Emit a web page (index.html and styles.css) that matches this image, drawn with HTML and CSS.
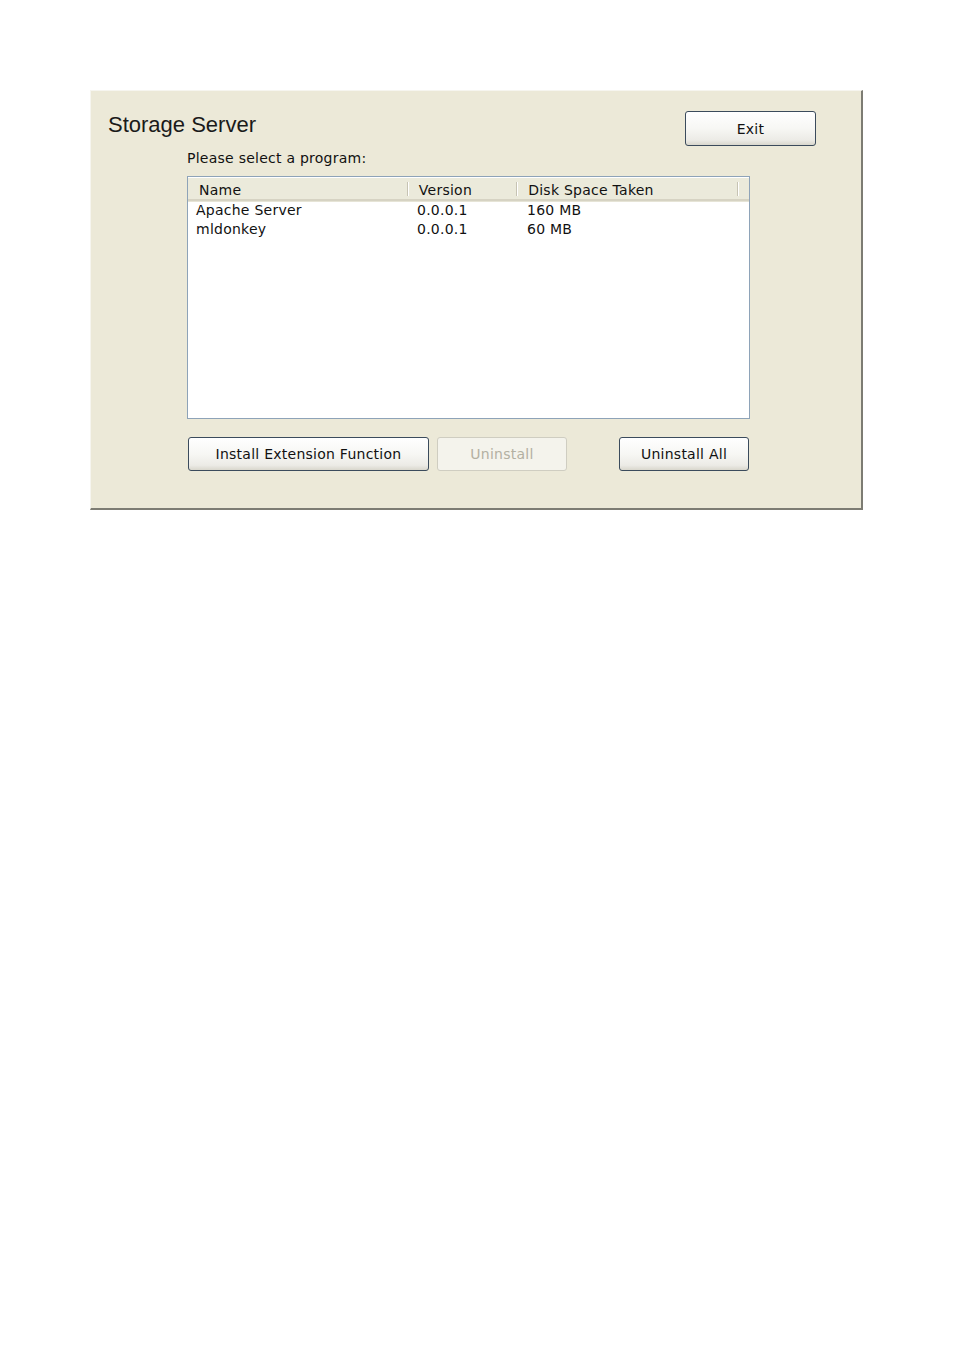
FILE: index.html
```html
<!DOCTYPE html>
<html>
<head>
<meta charset="utf-8">
<link rel="stylesheet" href="styles.css">
</head>
<body>
<div class="panel">
  <div class="top">
    <h1 class="title">Storage Server</h1>
    <button class="btn exit">Exit</button>
  </div>
  <div class="content">
    <div class="label">Please select a program:</div>
    <div class="list">
      <div class="list-head">
        <div class="hcell c1">Name</div>
        <div class="hcell c2">Version</div>
        <div class="hcell c3">Disk Space Taken</div>
        <div class="hcell c4"></div>
      </div>
      <div class="row">
        <div class="cell c1">Apache Server</div>
        <div class="cell c2">0.0.0.1</div>
        <div class="cell c3">160 MB</div>
      </div>
      <div class="row">
        <div class="cell c1">mldonkey</div>
        <div class="cell c2">0.0.0.1</div>
        <div class="cell c3">60 MB</div>
      </div>
    </div>
    <div class="actions">
      <button class="btn install">Install Extension Function</button>
      <button class="btn uninstall" disabled>Uninstall</button>
      <button class="btn uninstall-all">Uninstall All</button>
    </div>
  </div>
</div>
</body>
</html>
```
FILE: styles.css
```css
html, body {
  margin: 0;
  padding: 0;
  background: #ffffff;
}
body {
  font-family: "DejaVu Sans", Verdana, sans-serif;
  font-size: 14px;
  letter-spacing: 0.25px;
  color: #000;
}
.panel {
  margin: 90px 0 0 90px;
  width: 770px;
  height: 417px;
  box-sizing: content-box;
  background: #ECE9D8;
  border-top: 1px solid #f6f5ef;
  border-left: 1px solid #f6f5ef;
  border-right: 2px solid #7d7c73;
  border-bottom: 2px solid #7d7c73;
}
.top {
  display: flex;
  justify-content: space-between;
  align-items: flex-start;
  padding: 20px 45px 0 17px;
}
.title {
  margin: 1px 0 0 0;
  font-family: "Liberation Sans", Arial, sans-serif;
  font-weight: normal;
  font-size: 22px;
  line-height: 26px;
  color: #1a1a1a;
  letter-spacing: 0;
}
.btn {
  font-family: "DejaVu Sans", Verdana, sans-serif;
  font-size: 14px;
  letter-spacing: 0.25px;
  color: #111;
  height: 34px;
  border: 1px solid #3b4b5c;
  border-radius: 3px;
  background: linear-gradient(#ffffff 0%, #f7f7f4 50%, #ecebe6 85%, #d9d7cd 100%);
  padding: 0;
  cursor: default;
}
.exit {
  width: 131px;
  height: 35px;
}
.content {
  margin-left: 96px;
  width: 563px;
}
.label {
  margin-top: 4px;
  line-height: 16px;
  height: 16px;
  color: #111;
}
.list {
  margin-top: 10px;
  height: 241px;
  background: #fff;
  border: 1px solid #8ea3b8;
  box-sizing: content-box;
}
.list-head {
  display: flex;
  margin-top: 1px;
  padding-top: 3px;
  height: 18px;
  background: #EBEADB;
  border-bottom: 2px solid #d6d3c3;
  box-shadow: 0 1px 0 #e6e4d6;
}
.hcell {
  box-sizing: border-box;
  padding-left: 11px;
  line-height: 18px;
  position: relative;
  color: #111;
}
.hcell::after {
  content: "";
  position: absolute;
  right: 0;
  top: 1px;
  height: 14px;
  width: 1px;
  background: #c6c3b3;
  box-shadow: 1px 0 0 #fff;
}
.hcell.c4::after { display: none; }
.c1 { width: 221px; }
.c2 { width: 110px; }
.c3 { width: 222px; }
.c4 { flex: 1; }
.row {
  display: flex;
  height: 19px;
  line-height: 19px;
}
.cell {
  box-sizing: border-box;
  padding-left: 8px;
  color: #111;
}
.actions {
  display: flex;
  margin-top: 18px;
  padding-left: 1px;
}
.install { width: 241px; }
.uninstall {
  width: 130px;
  margin-left: 8px;
  border-color: #cfcdc1;
  background: #f4f3ec;
  color: #b3b0a2;
}
.uninstall-all {
  width: 130px;
  margin-left: 52px;
}
```
